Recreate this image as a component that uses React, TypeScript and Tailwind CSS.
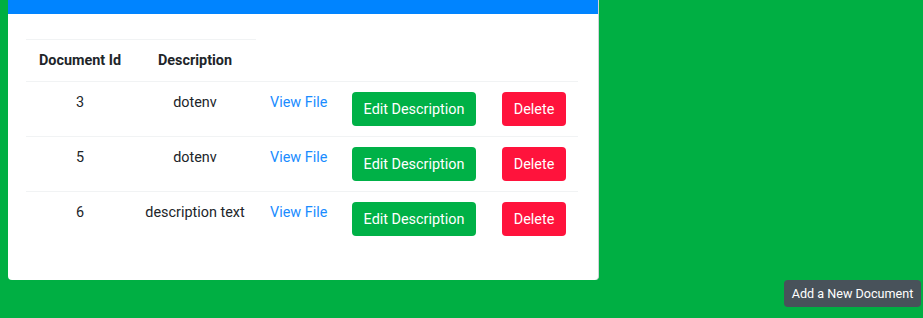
import React from "react";

const docs = [
  { id: 3, description: "dotenv" },
  { id: 5, description: "dotenv" },
  { id: 6, description: "description text" },
];

export default function App() {
  return (
    <div className="min-h-[318px] w-[923px] bg-[#00af43] font-['Roboto',sans-serif] text-[14.4px] leading-[21px] text-[#212529]">
      {/* Documents card */}
      <div className="ml-[8px] w-[591px] rounded-b-[4px] border-r border-[#d0d4d8] bg-white">
        <div className="h-[14px] bg-[#0084ff]" />
        <div className="pl-[18px] pt-[25px] pb-[34px]">
          {/* Header row */}
          <div className="grid w-[230px] grid-cols-[108px_122px] border-t border-[#f1f3f4] font-bold">
            <div className="pt-[10px] pb-[10px] text-center">Document Id</div>
            <div className="pt-[10px] pb-[10px] text-center">Description</div>
          </div>
          {docs.map((d) => (
            <div
              key={d.id}
              className="grid w-[552px] grid-cols-[108px_122px_84px_148px_90px] border-t border-[#f1f3f4]"
            >
              <div className="pt-[10px] text-center">{d.id}</div>
              <div className="pt-[10px] text-center">{d.description}</div>
              <div className="pt-[10px] pl-[14px]">
                <a className="cursor-pointer text-[#1a8cff]">View File</a>
              </div>
              <div className="pt-[10px] pb-[10px] pl-[12px]">
                <button className="h-[34px] w-[124px] rounded-[4px] bg-[#00b147] text-white">
                  Edit Description
                </button>
              </div>
              <div className="pt-[10px] pb-[10px] pl-[14px]">
                <button className="h-[34px] w-[64px] rounded-[4px] bg-[#ff133c] text-white">
                  Delete
                </button>
              </div>
            </div>
          ))}
        </div>
      </div>

      {/* Add button */}
      <div className="flex justify-end pr-[2px]">
        <button className="h-[27px] w-[137px] rounded-[4px] bg-[#48525a] text-[12.6px] text-white">
          Add a New Document
        </button>
      </div>
    </div>
  );
}
